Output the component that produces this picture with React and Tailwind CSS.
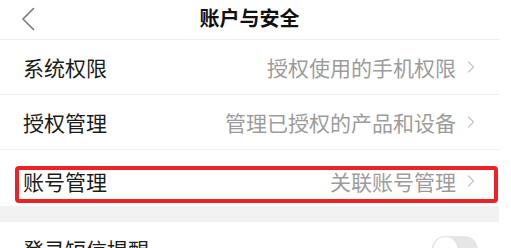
import React from "react";

const font = { fontFamily: '"Noto Sans CJK SC", "Noto Sans", sans-serif' };

function Chevron() {
  return (
    <svg width="8" height="12" viewBox="0 0 8 12" className="shrink-0">
      <polyline points="1.5,1 6.5,6 1.5,11" fill="none" stroke="#c4c4c4" strokeWidth="1.2" strokeLinecap="round" strokeLinejoin="round" />
    </svg>
  );
}

function Row({ left, right, className = "" }) {
  return (
    <div className={`flex items-center justify-between pl-[23px] pr-[24px] border-b border-[#efefef] ${className}`}>
      <span className="text-[21px] leading-none text-[#1c1c1c]">{left}</span>
      <div className="flex items-center gap-[11px]">
        <span className="text-[21px] leading-none text-[#9c9c9c]">{right}</span>
        <Chevron />
      </div>
    </div>
  );
}

export default function App() {
  return (
    <div className="w-[511px] h-[248px] overflow-hidden bg-white" style={font}>
      <div className="w-[499px]">
        <div className="h-[40px] grid grid-cols-[1fr_auto_1fr] items-center border-b border-[#efefef]">
          <div className="pl-[21px] pb-[2px] flex items-center">
            <svg width="14" height="24" viewBox="0 0 14 24">
              <polyline points="12.5,1.5 2,12 12.5,22.5" fill="none" stroke="#7a7a7a" strokeWidth="1.6" strokeLinecap="round" strokeLinejoin="round" />
            </svg>
          </div>
          <span className="text-[20px] leading-none font-bold text-[#111] pb-[4px]">账户与安全</span>
          <div />
        </div>
        <Row left="系统权限" right="授权使用的手机权限" className="h-[55px]" />
        <Row left="授权管理" right="管理已授权的产品和设备" className="h-[55px]" />
        <div className="relative">
          <Row left="账号管理" right="关联账号管理" className="h-[56px] pt-[6px] border-b-0" />
          <div className="absolute left-[15px] right-[1px] top-[16px] h-[37px] border-[4px] border-[#ee2222] rounded-[4px] pointer-events-none" />
        </div>
        <div className="h-[16px] bg-[#f2f2f2]" />
        <div className="h-[55px] flex items-center justify-between pl-[23px] pr-[21px]">
          <span className="text-[21px] leading-none text-[#1c1c1c]">登录短信提醒</span>
          <div className="w-[46px] h-[27px] rounded-full bg-[#e6e6e6] p-[1px] flex items-center">
            <div className="w-[25px] h-[25px] rounded-full bg-white shadow-[0_1px_2px_rgba(0,0,0,0.25)]" />
          </div>
        </div>
      </div>
    </div>
  );
}
